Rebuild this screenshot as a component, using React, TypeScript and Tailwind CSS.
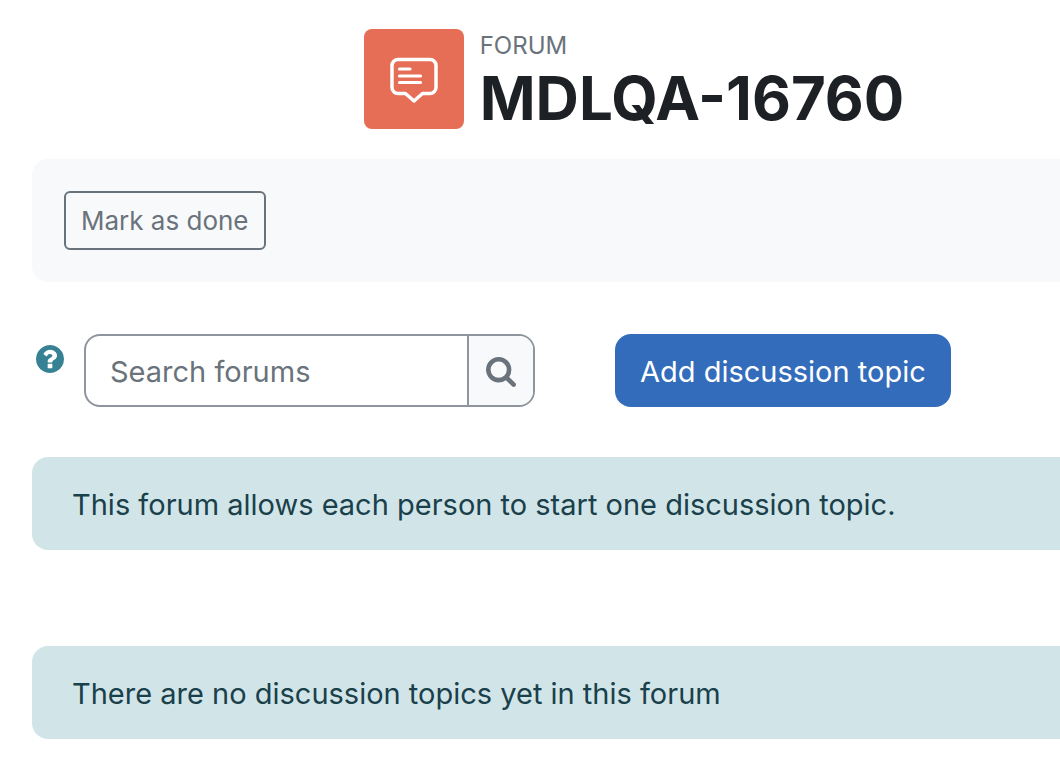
function ForumIcon() {
  return (
    <svg viewBox="0 0 48 48" className="size-12" fill="none" stroke="white" strokeWidth="3.5" strokeLinecap="round" strokeLinejoin="round" aria-hidden="true">
      <path d="M8 4.500h32a6 6 0 0 1 6 6v22a6 6 0 0 1-6 6h-7.500L24 46l-8.500-7.500H8a6 6 0 0 1-6-6v-22a6 6 0 0 1 6-6Z" />
      <path d="M9.500 14h10.500M9.500 21h21M9.500 27.500h21" strokeWidth="3.2" />
    </svg>
  )
}

function HelpIcon() {
  return (
    <svg viewBox="128 128 1536 1536" className="size-7" fill="currentColor" aria-hidden="true">
      <path d="M1024 1376v-192q0-14-9-23t-23-9h-192q-14 0-23 9t-9 23v192q0 14 9 23t23 9h192q14 0 23-9t9-23zm256-672q0-88-55.500-163t-138.500-116-170-41q-243 0-371 213-15 24 8 42l132 100q7 6 19 6 16 0 25-12 53-68 86-92 34-24 86-24 48 0 85.500 26t37.500 59q0 38-20 61t-68 45q-63 28-115.500 86.500t-52.500 125.500v36q0 14 9 23t23 9h192q14 0 23-9t9-23q0-19 21.500-49.500t54.500-49.500q32-18 49-28.500t46-35 44.500-48 28-60.500 12.500-81zm384 192q0 209-103 385.500t-279.500 279.500-385.500 103-385.500-103-279.500-279.500-103-385.500 103-385.500 279.500-279.500 385.500-103 385.500 103 279.500 279.500 103 385.500z" />
    </svg>
  )
}

function SearchIcon() {
  return (
    <svg viewBox="64 128 1664 1664" className="size-[30px]" fill="currentColor" aria-hidden="true">
      <path d="M1216 832q0-185-131.500-316.500T768 384 451.500 515.500 320 832t131.500 316.500T768 1280t316.500-131.500T1216 832zm512 832q0 52-38 90t-90 38q-54 0-90-38l-343-342q-179 124-399 124-143 0-273.500-55.500t-225-150-150-225T64 832t55.500-273.500 150-225 225-150T768 128t273.500 55.500 225 150 150 225T1472 832q0 220-124 399l343 343q37 37 37 90z" />
    </svg>
  )
}

function Notice({ text }: { text: string }) {
  return (
    <div className="rounded-l-2xl bg-[#d1e5e8] pt-[25px] pb-[23px] pl-10 text-[29px] leading-[45px] text-[#1a404b]">
      {text}
    </div>
  )
}

export default function App() {
  return (
    <main className="min-h-screen overflow-hidden bg-white pt-[29px] pl-8 font-['Inter',sans-serif]">
      <header className="mb-[26px] flex justify-center gap-4 pl-44">
        <div className="flex size-[100px] shrink-0 items-center justify-center rounded-lg bg-[#e66e56]">
          <ForumIcon />
        </div>
        <div>
          <div className="text-2xl leading-[34px] text-[#6a737b]">FORUM</div>
          <h1 className="text-[60px] leading-[70px] font-bold text-[#1d2125]">MDLQA-16760</h1>
        </div>
      </header>

      <section className="mb-[52px] rounded-l-2xl bg-[#f8f9fb] p-8">
        <button className="block rounded-md border-2 border-[#6a737b] px-[15px] py-2 text-[26px] leading-[39px] text-[#6a737b]">
          Mark as done
        </button>
      </section>

      <div className="mb-[50px] flex">
        <button className="mt-[11px] mr-5 ml-1 size-7 shrink-0 self-start text-[#378195]" aria-label="Help with search">
          <HelpIcon />
        </button>
        <form className="flex h-[73px] w-[451px] shrink-0 overflow-hidden rounded-2xl border-2 border-[#8f959e]" onSubmit={e => e.preventDefault()}>
          <input
            type="text"
            aria-label="Search forums"
            placeholder="Search forums"
            className="min-w-0 flex-1 px-6 pt-0.5 text-[29px] text-[#495057] outline-none placeholder:text-[#6a737b]"
          />
          <button type="submit" aria-label="Search" className="flex w-[66px] items-center justify-center border-l-2 border-[#8f959e] bg-[#f8f9fb] pt-0.5 text-[#6a737b]">
            <SearchIcon />
          </button>
        </form>
        <button className="ml-20 h-[73px] rounded-2xl bg-[#326cba] px-[25px] pt-0.5 text-[29px] text-white">
          Add discussion topic
        </button>
      </div>

      <div className="flex flex-col gap-24">
        <Notice text="This forum allows each person to start one discussion topic." />
        <Notice text="There are no discussion topics yet in this forum" />
      </div>
    </main>
  )
}
